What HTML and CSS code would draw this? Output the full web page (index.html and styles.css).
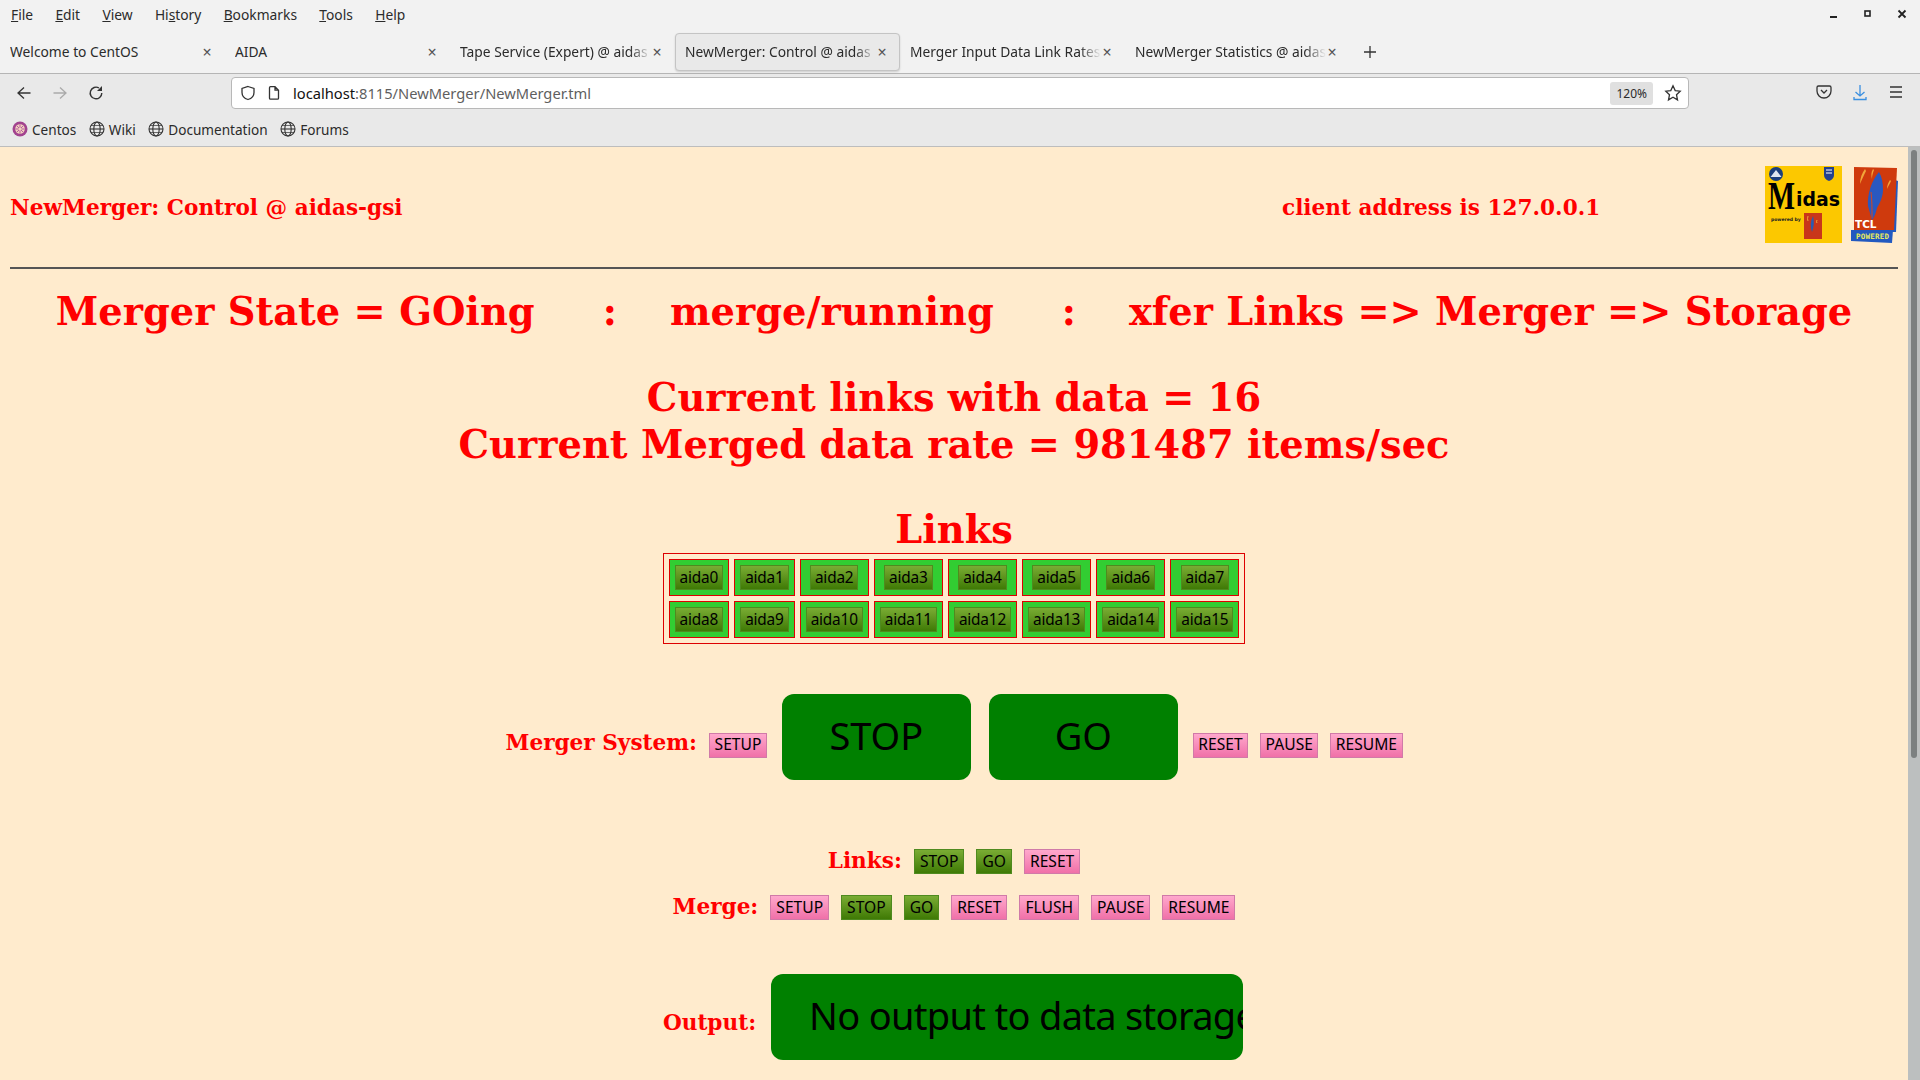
FILE: index.html
```html
<!DOCTYPE html>
<html lang="en">
<head>
<meta charset="utf-8">
<title>NewMerger: Control @ aidas-gsi</title>
<link rel="stylesheet" href="styles.css">
</head>
<body>
<div class="chrome">
  <div class="menubar">
    <nav class="menus">
      <span><u>F</u>ile</span><span><u>E</u>dit</span><span><u>V</u>iew</span><span>Hi<u>s</u>tory</span><span><u>B</u>ookmarks</span><span><u>T</u>ools</span><span><u>H</u>elp</span>
    </nav>
    <div class="winctl">
      <svg width="10" height="10" viewBox="0 0 10 10"><rect x="1" y="7" width="7" height="2" fill="#222"/></svg>
      <svg width="10" height="10" viewBox="0 0 10 10"><rect x="2" y="2" width="5" height="5" fill="none" stroke="#222" stroke-width="1.6"/></svg>
      <svg width="10" height="10" viewBox="0 0 10 10"><path d="M1.5 1.5l7 7M8.5 1.5l-7 7" stroke="#222" stroke-width="1.8"/></svg>
    </div>
  </div>
  <div class="tabbar">
    <div class="tab"><span class="tabtext">Welcome to CentOS</span><span class="x">×</span></div>
    <div class="tab"><span class="tabtext">AIDA</span><span class="x">×</span></div>
    <div class="tab"><span class="tabtext fade">Tape Service (Expert) @ aidas</span><span class="x">×</span></div>
    <div class="tab active"><span class="tabtext fade">NewMerger: Control @ aidas</span><span class="x">×</span></div>
    <div class="tab"><span class="tabtext fade">Merger Input Data Link Rates</span><span class="x">×</span></div>
    <div class="tab"><span class="tabtext fade">NewMerger Statistics @ aidas</span><span class="x">×</span></div>
    <svg class="plus" width="14" height="14" viewBox="0 0 14 14"><path d="M7 1v12M1 7h12" stroke="#333" stroke-width="1.3"/></svg>
  </div>
  <div class="navbar">
    <svg class="nav" width="16" height="16" viewBox="0 0 16 16"><path d="M14.500 8H2M8 2.500L2 8l6 5.500" fill="none" stroke="#333" stroke-width="1.300"/></svg>
    <svg class="nav" width="16" height="16" viewBox="0 0 16 16"><path d="M1.500 8H14M8 2.500L14 8l-6 5.500" fill="none" stroke="#aaa" stroke-width="1.300"/></svg>
    <svg class="nav" width="16" height="16" viewBox="0 0 16 16"><path d="M13.800 8A5.800 5.800 0 1 1 11 3" fill="none" stroke="#333" stroke-width="1.400"/><path d="M14 1v5H9z" fill="#333"/></svg>
    <div class="urlbar">
      <svg width="16" height="16" viewBox="0 0 16 16"><path d="M8 1.500l6 2v4c0 3.500-2.500 6-6 7-3.500-1-6-3.500-6-7v-4z" fill="none" stroke="#333" stroke-width="1.300"/></svg>
      <svg width="14" height="16" viewBox="0 0 14 16"><path d="M3.500 1.700h4.500l3.500 3.500v8a1 1 0 0 1-1 1h-7a1 1 0 0 1-1-1v-10.500a1 1 0 0 1 1-1zM8 1.700v3.500h3.500" fill="none" stroke="#333" stroke-width="1.300"/></svg>
      <span class="url"><span class="host">localhost</span>:8115/NewMerger/NewMerger.tml</span>
      <span class="zoomlvl">120%</span>
      <svg width="18" height="18" viewBox="0 0 18 18"><path d="M9 1.800l2.200 4.800 5 .6-3.700 3.500 1 5.200L9 13.300l-4.500 2.600 1-5.200L1.800 7.200l5-.6z" fill="none" stroke="#333" stroke-width="1.300"/></svg>
    </div>
    <div class="tools">
      <svg width="16" height="16" viewBox="0 0 16 16"><path d="M2.500 2h11a1.500 1.500 0 0 1 1.500 1.500V7a7 7 0 0 1-14 0V3.500A1.500 1.500 0 0 1 2.500 2z" fill="none" stroke="#333" stroke-width="1.300"/><path d="M5 6l3 3 3-3" fill="none" stroke="#333" stroke-width="1.300"/></svg>
      <svg width="16" height="18" viewBox="0 0 16 18"><path d="M8 1v11M3.500 8L8 12l4.500-4M2 13v2.500h12V13" fill="none" stroke="#3a8fe0" stroke-width="1.300"/></svg>
      <svg width="16" height="16" viewBox="0 0 16 16"><path d="M2 3h12M2 8h12M2 13h12" stroke="#333" stroke-width="1.500"/></svg>
    </div>
  </div>
  <div class="bookmarks">
    <span class="bm"><svg width="16" height="16" viewBox="0 0 16 16"><circle cx="8" cy="8" r="7.500" fill="#a2438f"/><circle cx="8" cy="8" r="4.800" fill="#f2d2bc"/><path d="M8 3.500v9M3.500 8h9M4.800 4.800l6.400 6.400M11.200 4.800l-6.400 6.400" stroke="#b35aa0" stroke-width="1"/><circle cx="8" cy="8" r="1.500" fill="#f2d2bc"/></svg>Centos</span>
    <span class="bm"><svg width="16" height="16" viewBox="0 0 16 16"><use href="#globe"/></svg>Wiki</span>
    <span class="bm"><svg width="16" height="16" viewBox="0 0 16 16"><use href="#globe"/></svg>Documentation</span>
    <span class="bm"><svg width="16" height="16" viewBox="0 0 16 16"><use href="#globe"/></svg>Forums</span>
  </div>
</div>
<svg class="defs" width="0" height="0"><defs><g id="globe" fill="none" stroke="#333" stroke-width="1.100"><circle cx="8" cy="8" r="7"/><ellipse cx="8" cy="8" rx="3.200" ry="7"/><path d="M1 8h14"/><path d="M2 4.500h12M2 11.500h12" stroke-width=".7"/></g></defs></svg>

<div class="viewport">
  <main class="page">
    <header class="head">
      <h2 class="title">NewMerger: Control @ aidas-gsi</h2>
      <h2 class="client">client address is 127.0.0.1</h2>
      <div class="logos">
        <svg width="77" height="77" viewBox="0 0 77 77">
          <rect width="77" height="77" fill="#fcc800"/>
          <circle cx="11" cy="8" r="7" fill="#1b3f7c"/>
          <path d="M5.500 11l5.500-7 5.500 7z" fill="#dfe6ee"/>
          <path d="M59 1h10v8q0 4-5 6-5-2-5-6z" fill="#23408f"/>
          <path d="M61 4h6M61 7h6" stroke="#fff" stroke-width="1"/>
          <text x="3" y="43" class="m-big" textLength="27" lengthAdjust="spacingAndGlyphs">M</text>
          <text x="31" y="40" class="m-small" textLength="44" lengthAdjust="spacingAndGlyphs">idas</text>
          <text x="6" y="55" class="m-tiny">powered by</text>
          <rect x="39" y="47" width="18" height="26" fill="#c9361a"/>
          <path d="M48 50q-4 8-1 16 3-8 1-16z" fill="#2a5bb0"/>
          <path d="M43 50q-1 3 0 5M52 54q-1 2 0 3" stroke="#f2a63a" stroke-width="1" fill="none"/>
        </svg>
        <svg width="47" height="77" viewBox="0 0 47 77">
          <path d="M44 14l3 1-2 51-4 0z" fill="#2259c0"/>
          <path d="M3 1l43 1-3 62H3z" fill="#cf3a0d"/>
          <path d="M0 64h42l-1 13L0 75z" fill="#2259c0"/>
          <path d="M28 6c-7 8-12 22-11 34l4 14c3-4 4-8 5-12 3-5 6-12 6-18 0-7-1-13-4-18z" fill="#2a58c0"/>
          <path d="M20 26c1 8 1 16 1 26" stroke="#d8461a" stroke-width="1" fill="none"/>
          <path d="M14 3c-3 4-5 9-5 15 2-5 4-9 6-13zM22 3c-2 3-2 7-1 10 0-4 1-6 2-9zM39 14c-2 3-3 6-3 9 1-3 3-5 4-8z" fill="#f2a63a"/>
          <text x="4" y="62" class="t-tcl">TCL</text>
          <text x="5" y="73" class="t-pow" textLength="33">POWERED</text>
        </svg>
      </div>
    </header>
    <hr class="rule">
    <h1 class="state"><span>Merger State = GOing</span><span class="colon">:</span><span>merge/running</span><span class="colon">:</span><span>xfer Links =&gt; Merger =&gt; Storage</span></h1>
    <h1 class="rates">Current links with data = 16<br>Current Merged data rate = 981487 items/sec</h1>
    <h1 class="links-title">Links</h1>
    <table class="links">
      <tr>
        <td><button class="btn green">aida0</button></td><td><button class="btn green">aida1</button></td><td><button class="btn green">aida2</button></td><td><button class="btn green">aida3</button></td><td><button class="btn green">aida4</button></td><td><button class="btn green">aida5</button></td><td><button class="btn green">aida6</button></td><td><button class="btn green">aida7</button></td>
      </tr>
      <tr>
        <td><button class="btn green">aida8</button></td><td><button class="btn green">aida9</button></td><td><button class="btn green">aida10</button></td><td><button class="btn green">aida11</button></td><td><button class="btn green">aida12</button></td><td><button class="btn green">aida13</button></td><td><button class="btn green">aida14</button></td><td><button class="btn green">aida15</button></td>
      </tr>
    </table>
    <div class="row system">
      <h3 class="label">Merger System:</h3>
      <button class="btn pink">SETUP</button>
      <button class="big wide">STOP</button>
      <button class="big wide">GO</button>
      <button class="btn pink">RESET</button>
      <button class="btn pink">PAUSE</button>
      <button class="btn pink">RESUME</button>
    </div>
    <div class="row r-links">
      <h3 class="label">Links:</h3>
      <button class="btn green">STOP</button>
      <button class="btn green">GO</button>
      <button class="btn pink">RESET</button>
    </div>
    <div class="row r-merge">
      <h3 class="label">Merge:</h3>
      <button class="btn pink">SETUP</button>
      <button class="btn green">STOP</button>
      <button class="btn green">GO</button>
      <button class="btn pink">RESET</button>
      <button class="btn pink">FLUSH</button>
      <button class="btn pink">PAUSE</button>
      <button class="btn pink">RESUME</button>
    </div>
    <div class="row r-output">
      <h3 class="label">Output:</h3>
      <button class="big output"><span>No output to data storage</span></button>
    </div>
  </main>
  <div class="scrollbar"><div class="thumb"></div></div>
</div>
</body>
</html>
```
FILE: styles.css
```css
* { box-sizing: border-box; }
html, body { margin: 0; height: 100%; overflow: hidden; }
body { display: flex; flex-direction: column; font-family: "Noto Sans", sans-serif; background: #ffebcd; }
.defs { position: absolute; }

.chrome { flex: none; color: #2b2b2b; font-size: 14px; }
.menubar { height: 30px; background: #f2f2f2; display: flex; justify-content: space-between; align-items: center; padding-bottom: 2px; font-size: 13.800px; }
.menus { display: flex; gap: 22.300px; padding-left: 11px; }
.winctl { display: flex; gap: 24px; padding-right: 13px; }
.tabbar { height: 44px; background: #f2f2f2; border-bottom: 1px solid #b5b5b5; display: flex; align-items: center; padding: 3px 0 2px; }
.tab { width: 225px; height: 38px; display: flex; align-items: center; padding: 0 10px 0 9px; border: 1px solid transparent; border-radius: 4px; }
.tab.active { background: #e9e9e9; border-color: #c4c4c4; box-shadow: 0 1px 2px rgba(0,0,0,.15); }
.tabtext { flex: 1; white-space: nowrap; overflow: hidden; font-size: 13.800px; margin-right: -3px; padding-bottom: 2px; }
.tabtext.fade { -webkit-mask-image: linear-gradient(90deg, #000 88%, transparent 99%); mask-image: linear-gradient(90deg, #000 88%, transparent 99%); }
.x { flex: none; font-size: 16px; width: 14px; text-align: center; color: #555; }
.plus { margin-left: 13px; }
.navbar { height: 38px; background: #e9e9e9; display: flex; align-items: center; padding-left: 16px; }
.nav { margin-right: 20px; }
.urlbar { width: 1458px; height: 32px; background: #fff; border: 1px solid #b8b8b8; border-radius: 4px; display: flex; align-items: center; gap: 11px; margin-left: 107px; padding: 0 6px 0 8px; }
.url { flex: 1; color: #5f5f5f; font-size: 14.700px; margin-left: 1px; }
.host { color: #111; }
.zoomlvl { background: #e0e0e0; border-radius: 3px; font-size: 12px; padding: 3px 6px; }
.tools { display: flex; gap: 20px; margin-left: 127px; }
.bookmarks { height: 35px; background: #e9e9e9; border-bottom: 1px solid #bdbdbd; display: flex; align-items: center; padding-left: 12px; gap: 12.500px; font-size: 13.600px; }
.bm { display: flex; align-items: center; gap: 4px; }

.viewport { flex: 1; display: flex; min-height: 0; overflow: hidden; }
.page { flex: 1; min-width: 0; padding: 19px 10px 0; font-family: "DejaVu Serif", serif; color: #f00; text-align: center; }
.head { display: flex; align-items: center; height: 77px; }
.title, .client { margin: 0; padding-top: 5px; font-size: 21.600px; font-weight: 700; white-space: nowrap; }
.title { width: 1272px; text-align: left; }
.client { flex: 1; text-align: left; }
.logos { display: flex; gap: 9px; }
.logos svg { display: block; }
.m-big { font: 700 39px "Liberation Serif", serif; fill: #000; }
.m-small { font: 700 19px "DejaVu Sans", sans-serif; fill: #000; }
.m-tiny { font: 700 4.500px "DejaVu Sans", sans-serif; fill: #222; }
.t-tcl { font: 700 10.500px "DejaVu Sans", sans-serif; fill: #fff; }
.t-pow { font: 700 7.500px "DejaVu Sans Mono", monospace; fill: #e9ec5a; }
.rule { margin: 24px 0 0; border: 0; border-top: 2px solid #555; }
h1 { font-size: 38.400px; line-height: 47px; font-weight: 700; }
.state { margin: 0; padding-top: 19px; display: flex; justify-content: center; gap: 53px; }
.colon { margin-left: 15px; }
.rates { margin: 39px 0 0; }
.links-title { margin: 38px 0 0; }
.links { margin: 0 auto; border: 1px solid #d00; border-spacing: 5px; }
.links td { border: 1px solid #d00; background: #32cd32; padding: 5px; }
.btn { font: 400 15.600px/1 "Noto Sans", sans-serif; color: #000; padding: 0 5px; height: 25px; border: 1px solid; display: block; cursor: pointer; }
.btn.green { background: linear-gradient(#7aac34, #3f7a05); border-color: #4f8a1f; }
.btn.pink { background: linear-gradient(#ffa8cc, #f070a8); border-color: #d07aa8; }
.links .btn { margin: 0 auto; padding: 0 4px; font-size: 15.400px; letter-spacing: -.2px; }
.row { display: flex; justify-content: center; align-items: center; gap: 12px; }
.label { margin: 0 0 2px; font-size: 21.600px; line-height: 25px; font-weight: 700; }
.big { background: #008000; border: 0; border-radius: 12px; color: #000; font: 400 38px "Noto Sans", sans-serif; cursor: pointer; height: 86px; padding-bottom: 5px; }
.wide { width: 189px; margin: 0 3px; }
.system { margin-top: 50px; }
.system .btn { margin-top: 16px; padding: 0 4.500px; }
.system .label { margin: 10px 0 0; }
.r-links { margin-top: 68px; }
.r-merge { margin-top: 19px; }
.r-output { margin-top: 53px; gap: 15px; }
.r-output .label { margin: 10px 0 0; }
.output { width: 472px; overflow: hidden; text-align: left; padding: 0 0 5px 38px; white-space: nowrap; letter-spacing: -.7px; margin-right: 2px; }
.scrollbar { flex: none; width: 12px; background: #bcbfbf; padding: 3px; }
.thumb { height: 608px; background: #7c8080; border-radius: 3px; }
```
